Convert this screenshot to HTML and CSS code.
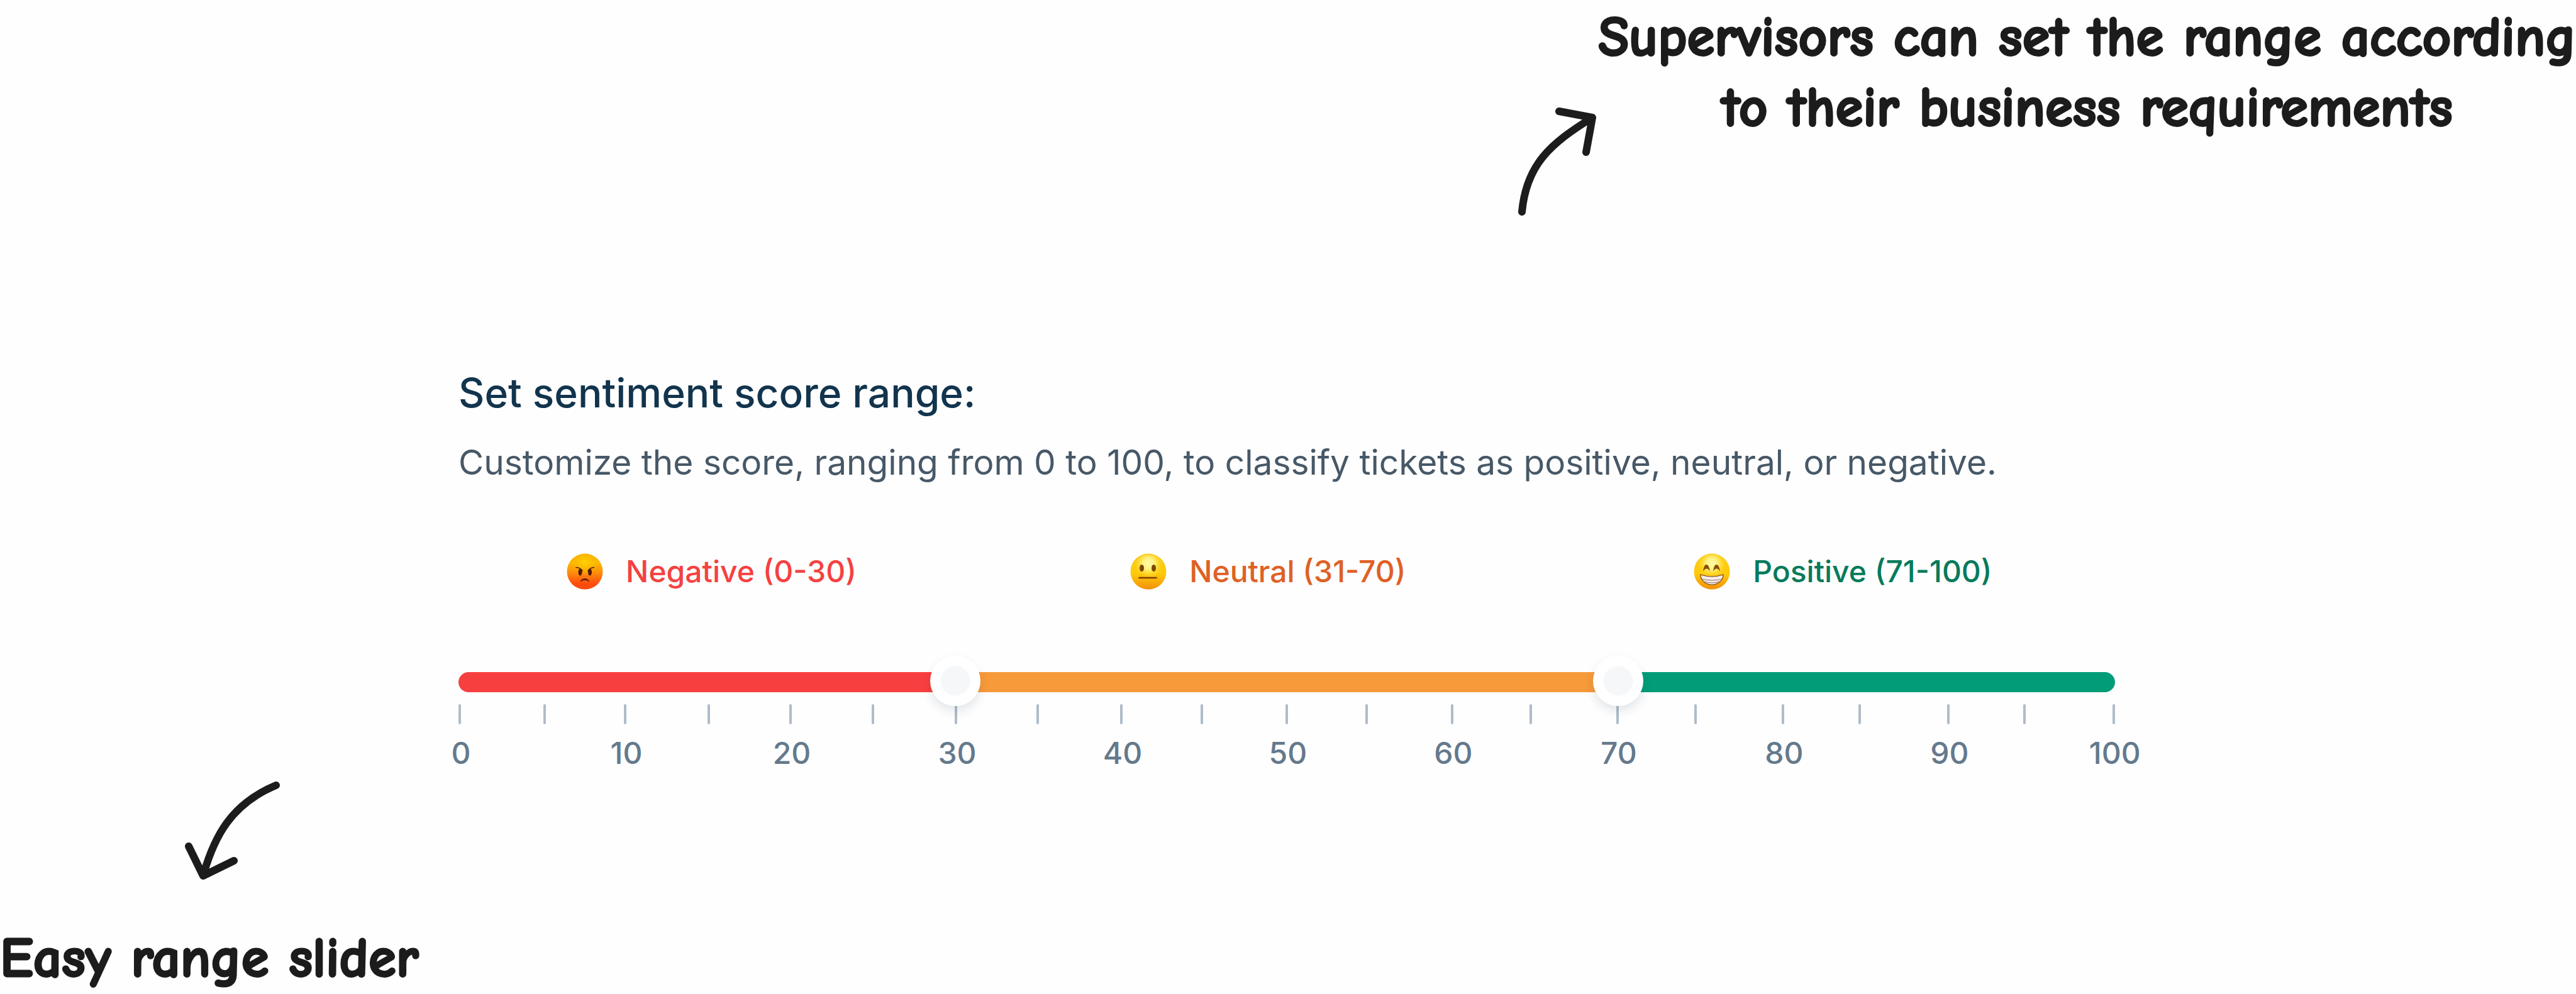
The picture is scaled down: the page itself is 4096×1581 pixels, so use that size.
FILE: index.html
```html
<!DOCTYPE html>
<html lang="en">
<head>
  <meta charset="UTF-8">
  <meta name="viewport" content="width=device-width, initial-scale=1">
  <title>Sentiment score range</title>
  <link rel="stylesheet" href="styles.css">
</head>
<body>
  <div class="callout callout-top">
    <svg class="arrow arrow-up" viewBox="0 0 140 190" aria-hidden="true">
      <path d="M20 168C27 92 66 59 132 18M79 8L132 18L122 73"/>
    </svg>
    <p>Supervisors can set the range according<br>to their business requirements</p>
  </div>

  <main class="settings">
    <h1>Set sentiment score range:</h1>
    <p class="description">Customize the score, ranging from 0 to 100, to classify tickets as positive, neutral, or negative.</p>

    <div class="legend">
      <label class="negative" for="negativeLimit">
        <svg class="emoji" viewBox="0 0 58 58" aria-hidden="true">
          <defs>
            <linearGradient id="angry" x1="0" y1="0" x2="0" y2="1">
              <stop offset="0" stop-color="#f9a806"/>
              <stop offset="0.25" stop-color="#fdb902"/>
              <stop offset="0.55" stop-color="#fd8a0c"/>
              <stop offset="0.85" stop-color="#fe4a0c"/>
              <stop offset="1" stop-color="#f8500f"/>
            </linearGradient>
            <radialGradient id="angryGlow" cx="0.5" cy="0.24" r="0.38">
              <stop offset="0" stop-color="#ffd200"/>
              <stop offset="1" stop-color="#ffc000" stop-opacity="0"/>
            </radialGradient>
          </defs>
          <circle cx="29" cy="29" r="28.5" fill="url(#angry)"/>
          <circle cx="29" cy="29" r="28" fill="url(#angryGlow)"/>
          <ellipse cx="21.5" cy="30" rx="3" ry="5.5" fill="#4f1b08"/>
          <ellipse cx="37" cy="30" rx="3" ry="5.5" fill="#4f1b08"/>
          <path d="M15 22.5Q22 23 25 28M43.5 22.5Q37 23 34 28" stroke="#5a1d06" stroke-width="1.6" fill="none" stroke-linecap="round"/>
          <path d="M22 45C25 39 33 39 36 45C32 41.5 26 41.5 22 45Z" fill="#5a1d06" stroke="#5a1d06"/>
        </svg>
        Negative (0-30)
      </label>
      <span class="neutral">
        <svg class="emoji" viewBox="0 0 58 58" aria-hidden="true">
          <defs>
            <linearGradient id="yellow" x1="0" y1="0" x2="0" y2="1">
              <stop offset="0" stop-color="#fcc91c"/>
              <stop offset="0.55" stop-color="#fecb0b"/>
              <stop offset="1" stop-color="#f39008"/>
            </linearGradient>
            <radialGradient id="yellowGlow" cx="0.5" cy="0.27" r="0.42">
              <stop offset="0" stop-color="#fffaa8"/>
              <stop offset="0.4" stop-color="#fff283"/>
              <stop offset="1" stop-color="#ffdc20" stop-opacity="0"/>
            </radialGradient>
          </defs>
          <circle cx="29" cy="29" r="28.5" fill="url(#yellow)"/>
          <circle cx="29" cy="29" r="27" fill="url(#yellowGlow)"/>
          <ellipse cx="18.5" cy="23.5" rx="3.5" ry="5.5" fill="#7c4503"/>
          <ellipse cx="37.5" cy="23.5" rx="3.5" ry="5.5" fill="#7c4503"/>
          <path d="M14.5 39H41.5" stroke="#7c3e02" stroke-width="2.6" stroke-linecap="round"/>
        </svg>
        Neutral (31-70)
      </span>
      <label class="positive" for="positiveLimit">
        <svg class="emoji" viewBox="0 0 58 58" aria-hidden="true">
          <circle cx="29" cy="29" r="28.5" fill="url(#yellow)"/>
          <circle cx="29" cy="29" r="27" fill="url(#yellowGlow)"/>
          <path d="M15 29C16 21 18 18 20.5 18C23 18 25 22 26 29C23 23 18 23 15 29Z" fill="#8a4f06"/>
          <path d="M31 29C32 21 34 18 36.5 18C39 18 41 22 42 29C39 23 34 23 31 29Z" fill="#8a4f06"/>
          <path d="M11 34Q29 40 47 34C47 43 39 50 29 50C19 50 11 43 11 34Z" fill="#f5ecea" stroke="#7c3a0c" stroke-width="1.2"/>
          <path d="M13 41Q29 45 45 41M17 45Q29 49 41 45" fill="none" stroke="#9b6f62"/>
        </svg>
        Positive (71-100)
      </label>
    </div>

    <div class="slider">
      <div class="track">
        <span class="part part-negative"></span>
        <span class="part part-neutral"></span>
        <span class="part part-positive"></span>
      </div>
      <input type="range" id="negativeLimit" min="0" max="100" value="30">
      <input type="range" id="positiveLimit" min="0" max="100" value="70">
    </div>

    <div class="ticks">
      <i></i><i></i><i></i><i></i><i></i><i></i><i></i>
      <i></i><i></i><i></i><i></i><i></i><i></i><i></i>
      <i></i><i></i><i></i><i></i><i></i><i></i><i></i>
    </div>

    <div class="scale">
      <span>0</span>
      <span>10</span>
      <span>20</span>
      <span>30</span>
      <span>40</span>
      <span>50</span>
      <span>60</span>
      <span>70</span>
      <span>80</span>
      <span>90</span>
      <span>100</span>
    </div>
  </main>

  <div class="callout callout-bottom">
    <svg class="arrow arrow-down" viewBox="0 0 160 164" aria-hidden="true">
      <path d="M149 10C77 40 51 92 34 150M10 107L33 154L82 130"/>
    </svg>
    <p>Easy range slider</p>
  </div>
</body>
</html>
```

FILE: styles.css
```css
* {
  box-sizing: border-box;
}

body {
  margin: 0;
  background-color: #fefefe;
  font-family: Inter, sans-serif;
  color: #12344d;
}

h1,
p {
  margin: 0;
}

.callout {
  font-family: "Comic Sans MS", "Comic Neue", Lato, sans-serif;
  font-size: 89px;
  font-weight: bold;
  line-height: 112px;
  color: #1c1c1c;
  -webkit-text-stroke: 3px #1c1c1c;
}

.callout-top {
  display: flex;
  justify-content: flex-end;
  gap: 2px;
  padding-top: 3px;
  text-align: center;
}

.arrow {
  display: block;
  fill: none;
  stroke: #1c1c1c;
  stroke-width: 12px;
  stroke-linecap: round;
  stroke-linejoin: round;
}

.arrow-up {
  width: 140px;
  height: 190px;
  margin-top: 166px;
}

.settings {
  width: 64.3%;
  margin: 226px 0 0 17.8%;
}

h1 {
  font-size: 64px;
  font-weight: 500;
  line-height: 80px;
}

.description {
  margin-top: 34px;
  font-size: 55px;
  line-height: 72px;
  color: #475867;
}

.legend {
  display: grid;
  grid-template-columns: repeat(3, 36.4%);
  margin-top: 106px;
  padding-left: 172px;
  font-size: 48px;
  font-weight: 500;
  line-height: 64px;
}

.legend > * {
  display: flex;
  align-items: center;
  gap: 36px;
}

.emoji {
  width: 58px;
  height: 58px;
}

.negative {
  color: #f54141;
}

.neutral {
  color: #de6126;
}

.positive {
  color: #087a5b;
}

.slider {
  position: relative;
  margin-top: 128px;
}

.track {
  display: flex;
  height: 32px;
  border-radius: 16px;
  overflow: hidden;
}

.part-negative {
  flex: 30;
  background-color: #f83f3f;
}

.part-neutral {
  flex: 40;
  background-color: #f79a3a;
}

.part-positive {
  flex: 30;
  background-color: #039c79;
}

/* both inputs lie over the track, half a thumb wider on each side */
.slider input {
  position: absolute;
  top: -26px;
  left: -40px;
  width: calc(100% + 80px);
  height: 80px;
  margin: 0;
  background: none;
  appearance: none;
  pointer-events: none;
}

.slider input::-webkit-slider-thumb {
  width: 80px;
  height: 80px;
  border-radius: 50%;
  background: radial-gradient(circle, #f5f7f8 23px, #fff 24px);
  box-shadow: 0 8px 16px rgba(18, 52, 77, 0.12);
  appearance: none;
  pointer-events: auto;
  cursor: pointer;
}

.ticks {
  display: grid;
  grid-template-columns:
    135fr 128fr 133fr 130fr 131fr 132fr 130fr 133fr 128fr 135fr
    127fr 136fr 125fr 138fr 124fr 139fr 122fr 141fr 121fr 142fr 4px;
  margin-top: 19px;
}

.ticks i {
  width: 4px;
  height: 32px;
  border-radius: 2px;
  background-color: #afbcc9;
}

.scale {
  display: flex;
  justify-content: space-between;
  margin: 14px -62px 0 -58px;
  font-size: 48px;
  font-weight: 500;
  line-height: 64px;
  color: #64798c;
}

.scale span {
  width: 124px;
  text-align: center;
}

.callout-bottom {
  margin-top: 9px;
}

.arrow-down {
  width: 160px;
  height: 164px;
  margin-left: 290px;
}

.callout-bottom p {
  margin-top: 65px;
}
```
